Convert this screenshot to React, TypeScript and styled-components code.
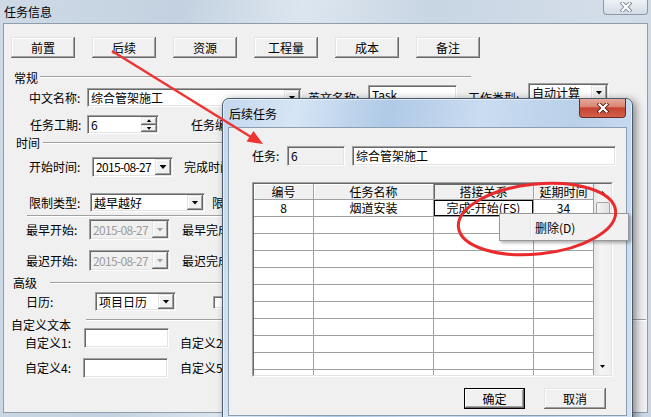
import React, { FC } from 'react'
import styled, { createGlobalStyle, css } from 'styled-components'

const GlobalStyle = createGlobalStyle`
  * { box-sizing: border-box; }
  html, body { margin: 0; padding: 0; }
  body {
    font-family: "Noto Sans CJK SC", "Noto Sans", sans-serif;
    font-size: 12px;
    color: #000;
    background: #f0f0f0;
  }
`

const raised = css`
  background: #f0f0f0;
  box-shadow: inset -1px -1px #696969, inset 1px 1px #e3e3e3, inset -2px -2px #a0a0a0, inset 2px 2px #fff;
`

const sunken = css`
  border: 1px solid;
  border-color: #a0a0a0 #fff #fff #a0a0a0;
  box-shadow: inset 1px 1px #696969, inset -1px -1px #e3e3e3;
`

const Screen = styled.div`
  position: relative;
  width: 651px;
  height: 417px;
  overflow: hidden;
`

const MainWindow = styled.div`
  width: 100%;
  height: 100%;
  display: flex;
  flex-direction: column;
  padding: 0 3px 4px 3px;
  background: linear-gradient(100deg, #cfdae6 0%, #c3d1e0 25%, #dde6ef 42%, #c8d5e3 60%, #d4dee9 85%, #cad6e3 100%);
`

const TitleBar = styled.div`
  height: 23px;
  flex: none;
  display: flex;
  justify-content: space-between;
  align-items: center;
  padding-left: 1px;
  line-height: 23px;
`

const MainClose = styled.div`
  align-self: flex-start;
  width: 45px;
  height: 15px;
  border: 1px solid #8a98a9;
  border-top: none;
  border-radius: 0 0 4px 4px;
  background: linear-gradient(#eef2f6, #d3dbe5);
  display: flex;
  align-items: center;
  justify-content: center;
`

const Client = styled.div`
  flex: 1;
  border: 1px solid #8f9cab;
  background: #f0f0f0;
  display: flex;
  flex-direction: column;
  overflow: hidden;
`

const Toolbar = styled.div`
  display: flex;
  gap: 17px;
  margin-top: 13px;
  padding-left: 7px;
  flex: none;
`

const PushButton = styled.div<{ $w: number; $default?: boolean }>`
  ${raised};
  flex: none;
  width: ${p => p.$w}px;
  height: 21px;
  display: flex;
  align-items: center;
  justify-content: center;
  line-height: 1;
  ${p => p.$default && css`
    box-shadow: inset 0 0 0 1px #000, inset -2px -2px #696969, inset 2px 2px #fff, inset -3px -3px #a0a0a0;
  `}
`

const GroupHead = styled.div<{ $top: number; $left: number }>`
  display: flex;
  align-items: flex-start;
  flex: none;
  margin-top: ${p => p.$top}px;
  padding-left: ${p => p.$left}px;
  height: 12px;
  line-height: 12px;
  white-space: nowrap;
`

const EtchedLine = styled.div<{ $gap: number; $drop: number; $w: number }>`
  flex: none;
  width: ${p => p.$w}px;
  margin-left: ${p => p.$gap}px;
  margin-top: ${p => p.$drop}px;
  border-top: 1px solid #a0a0a0;
  border-bottom: 1px solid #fff;
`

const Row = styled.div<{ $top: number; $left: number; $h: number }>`
  display: flex;
  align-items: flex-start;
  flex: none;
  margin-top: ${p => p.$top}px;
  padding-left: ${p => p.$left}px;
  height: ${p => p.$h}px;
  white-space: nowrap;
`

const Label = styled.span<{ $w?: number; $gap?: number; $low?: boolean }>`
  flex: none;
  align-self: center;
  line-height: 14px;
  width: ${p => (p.$w ? `${p.$w}px` : 'auto')};
  margin-left: ${p => p.$gap ?? 0}px;
  margin-top: ${p => (p.$low ? 9 : 0)}px;
`

const Field = styled.div<{ $w: number; $h: number; $mt?: number; $gap?: number; $gray?: boolean }>`
  ${sunken};
  flex: none;
  width: ${p => p.$w}px;
  height: ${p => p.$h}px;
  margin-top: ${p => p.$mt ?? 0}px;
  margin-left: ${p => p.$gap ?? 0}px;
  padding: 1px;
  background: ${p => (p.$gray ? '#f0f0f0' : '#fff')};
  display: flex;
  align-items: stretch;
`

const FieldText = styled.span<{ $dim?: boolean; $narrow?: boolean }>`
  flex: 1;
  min-width: 0;
  overflow: hidden;
  white-space: nowrap;
  padding-left: 2px;
  display: flex;
  align-items: center;
  line-height: 14px;
  color: ${p => (p.$dim ? '#9c9c9c' : '#000')};
  letter-spacing: ${p => (p.$narrow ? '-0.65px' : '0')};
`

const DropButton = styled.span`
  ${raised};
  flex: none;
  width: 16px;
  display: flex;
  align-items: center;
  justify-content: center;
`

const Arrow = styled.span<{ $dim?: boolean; $up?: boolean; $small?: boolean }>`
  flex: none;
  width: ${p => (p.$small ? 5 : 7)}px;
  height: ${p => (p.$small ? 3 : 4)}px;
  background: ${p => (p.$dim ? '#a0a0a0' : '#000')};
  clip-path: ${p => (p.$up ? 'polygon(50% 0, 100% 100%, 0 100%)' : 'polygon(0 0, 100% 0, 50% 100%)')};
`

const SpinStack = styled.span`
  flex: none;
  width: 16px;
  display: flex;
  flex-direction: column;
`

const SpinHalf = styled.span`
  ${raised};
  flex: 1;
  display: flex;
  align-items: center;
  justify-content: center;
`

const CheckBox = styled.span`
  ${sunken};
  flex: none;
  width: 13px;
  height: 13px;
  margin-left: 37px;
  margin-top: 4px;
  background: #fff;
`

/* ---------- dialog ---------- */

const Dialog = styled.div`
  position: absolute;
  left: 222px;
  top: 98px;
  width: 411px;
  height: 324px;
  border: 1px solid #4a5b70;
  border-radius: 7px 7px 0 0;
  background: linear-gradient(100deg, #c3d8ee 0%, #d6e5f5 16%, #afc9e6 36%, #cadcf0 56%, #b9d0e9 76%, #d3e2f3 100%);
  box-shadow: 3px 2px 9px rgba(0, 0, 0, 0.45), inset 0 0 0 1px rgba(255, 255, 255, 0.55);
  padding: 0 5px 5px 5px;
  display: flex;
  flex-direction: column;
  z-index: 1;
`

const DialogTitle = styled.div`
  height: 28px;
  flex: none;
  display: flex;
  justify-content: space-between;
  align-items: center;
  padding-left: 1px;
`

const DialogClose = styled.div`
  align-self: flex-start;
  width: 47px;
  height: 19px;
  margin-right: 1px;
  border: 1px solid #6e2c24;
  border-top: none;
  border-radius: 0 0 4px 4px;
  background: linear-gradient(#e6a89b 0%, #d98674 42%, #c5432f 50%, #d2604b 100%);
  display: flex;
  align-items: center;
  justify-content: center;
`

const DialogClient = styled.div`
  flex: 1;
  border: 1px solid #8b9db1;
  background: #f0f0f0;
  display: flex;
  flex-direction: column;
`

const GridFrame = styled.div`
  margin: 16px 0 0 23px;
  width: 361px;
  height: 195px;
  flex: none;
  border: 1px solid;
  border-color: #a0a0a0 #fff #fff #a0a0a0;
`

const GridInner = styled.div`
  width: 100%;
  height: 100%;
  border: 1px solid;
  border-color: #696969 #e3e3e3 #e3e3e3 #696969;
  background: #fff;
  display: flex;
  overflow: hidden;
`

const Cells = styled.div`
  display: grid;
  grid-template-columns: 60px 120px 100px 60px;
  grid-template-rows: 16px;
  grid-auto-rows: 17px;
  flex: none;
  align-content: start;
`

const HeadCell = styled.div<{ $active?: boolean }>`
  background: #f0f0f0;
  border-right: 1px solid #a0a0a0;
  border-bottom: 1px solid #a0a0a0;
  box-shadow: ${p => (p.$active ? 'inset 1px 1px #696969' : 'inset 1px 1px #fff')};
  text-align: center;
  line-height: 15px;
`

const DataCell = styled.div<{ $editing?: boolean }>`
  border-right: 1px solid #a0a0a0;
  border-bottom: 1px solid #a0a0a0;
  text-align: center;
  line-height: 16px;
  white-space: nowrap;
  overflow: hidden;
  ${p => p.$editing && css`box-shadow: inset 0 0 0 1px #000;`}
`

const ScrollBar = styled.div`
  flex: 1;
  display: flex;
  flex-direction: column;
  background: linear-gradient(90deg, #e6e6e6, #f4f4f4 40%, #f0f0f0);
`

const ScrollArrow = styled.div`
  height: 17px;
  flex: none;
  display: flex;
  align-items: center;
  justify-content: center;
`

const ScrollTrack = styled.div`
  flex: 1;
  padding: 1px 1px 0 2px;
`

const ScrollThumb = styled.div`
  height: 26px;
  border: 1px solid #a3a3a3;
  border-radius: 2px;
  background: linear-gradient(90deg, #f2f2f2, #e2e2e2);
`

const DialogActions = styled.div`
  display: flex;
  justify-content: flex-end;
  gap: 19px;
  margin-top: 11px;
  padding-right: 20px;
`

const ContextMenu = styled.div`
  position: absolute;
  left: 499px;
  top: 213px;
  width: 130px;
  height: 28px;
  border: 1px solid #979797;
  background: #f1f1f1;
  box-shadow: 2px 2px 3px rgba(0, 0, 0, 0.3);
  padding: 2px;
  display: flex;
  z-index: 2;
`

const MenuGutter = styled.div`
  flex: none;
  width: 29px;
  border-right: 1px solid #e2e3e3;
  box-shadow: 1px 0 #fff;
`

const MenuItem = styled.div`
  padding-left: 4px;
  display: flex;
  align-items: center;
`

const Annotation = styled.svg`
  position: absolute;
  left: 0;
  top: 0;
  z-index: 3;
  pointer-events: none;
`

const CloseGlyph: FC<{ outline: string }> = ({ outline }) => (
  <svg width="12" height="10" viewBox="0 0 12 10">
    <path d="M2.5 1.5 L9.5 8.5 M9.5 1.5 L2.5 8.5" stroke={outline} strokeWidth="4" strokeLinecap="square" />
    <path d="M2.5 1.5 L9.5 8.5 M9.5 1.5 L2.5 8.5" stroke="#fff" strokeWidth="2.2" strokeLinecap="square" />
  </svg>
)

const Combo: FC<{ w: number; h: number; text: string; mt?: number; narrow?: boolean; disabled?: boolean }> = ({
  w, h, text, mt, narrow, disabled,
}) => (
  <Field $w={w} $h={h} $mt={mt} $gray={disabled}>
    <FieldText $narrow={narrow} $dim={disabled}>{text}</FieldText>
    <DropButton>
      <Arrow $dim={disabled} />
    </DropButton>
  </Field>
)

const tabs = ['前置', '后续', '资源', '工程量', '成本', '备注']
const emptyRows = Array.from({ length: 10 })

const App: FC = () => (
  <Screen>
    <GlobalStyle />
    <MainWindow>
      <TitleBar>
        <span>任务信息</span>
        <MainClose>
          <CloseGlyph outline="#7d8896" />
        </MainClose>
      </TitleBar>
      <Client>
        <Toolbar>
          {tabs.map(t => (
            <PushButton key={t} $w={64}>{t}</PushButton>
          ))}
        </Toolbar>

        <GroupHead $top={14} $left={10}>
          常规
          <EtchedLine $gap={2} $drop={4} $w={431} />
        </GroupHead>

        <Row $top={4} $left={25} $h={19}>
          <Label $w={58}>中文名称:</Label>
          <Combo w={215} h={19} text="综合管架施工" />
          <Label $gap={6} $w={60}>英文名称:</Label>
          <Field $w={89} $h={20} $mt={-3}>
            <FieldText>Task</FieldText>
          </Field>
          <Label $gap={11} $w={60}>工作类型:</Label>
          <Combo w={81} h={19} mt={-5} text="自动计算" />
        </Row>

        <Row $top={8} $left={26} $h={19}>
          <Label $w={57}>任务工期:</Label>
          <Field $w={72} $h={19}>
            <FieldText>6</FieldText>
            <SpinStack>
              <SpinHalf><Arrow $up $small /></SpinHalf>
              <SpinHalf><Arrow $small /></SpinHalf>
            </SpinStack>
          </Field>
          <Label $gap={32}>任务编码:</Label>
        </Row>

        <GroupHead $top={3} $left={12}>
          时间
          <EtchedLine $gap={3} $drop={5} $w={428} />
        </GroupHead>

        <Row $top={8} $left={25} $h={20}>
          <Label $w={63}>开始时间:</Label>
          <Combo w={81} h={20} text="2015-08-27" narrow />
          <Label $gap={11}>完成时间:</Label>
        </Row>

        <Row $top={16} $left={25} $h={19}>
          <Label $w={61}>限制类型:</Label>
          <Combo w={115} h={19} text="越早越好" />
          <Label $gap={7}>限制时间:</Label>
        </Row>

        <Row $top={3} $left={23} $h={2}>
          <EtchedLine $gap={0} $drop={0} $w={600} />
        </Row>

        <Row $top={2} $left={22} $h={21}>
          <Label $w={63}>最早开始:</Label>
          <Combo w={81} h={21} text="2015-08-27" narrow disabled />
          <Label $gap={12}>最早完成:</Label>
        </Row>

        <Row $top={10} $left={22} $h={21}>
          <Label $w={63}>最迟开始:</Label>
          <Combo w={81} h={21} text="2015-08-27" narrow disabled />
          <Label $gap={12}>最迟完成:</Label>
        </Row>

        <GroupHead $top={6} $left={9}>
          高级
          <EtchedLine $gap={13} $drop={5} $w={560} />
        </GroupHead>

        <Row $top={3} $left={22} $h={19}>
          <Label $w={69}>日历:</Label>
          <Combo w={81} h={19} text="项目日历" />
          <CheckBox />
        </Row>

        <GroupHead $top={8} $left={7}>
          自定义文本
          <EtchedLine $gap={15} $drop={0} $w={560} />
        </GroupHead>

        <Row $top={-3} $left={21} $h={20}>
          <Label $w={59} $low>自定义1:</Label>
          <Field $w={85} $h={20} />
          <Label $gap={11} $low>自定义2:</Label>
        </Row>

        <Row $top={10} $left={21} $h={20}>
          <Label $w={58}>自定义4:</Label>
          <Field $w={85} $h={20} />
          <Label $gap={12}>自定义5:</Label>
        </Row>
      </Client>
    </MainWindow>

    <Dialog>
      <DialogTitle>
        <span>后续任务</span>
        <DialogClose>
          <CloseGlyph outline="#5a1d15" />
        </DialogClose>
      </DialogTitle>
      <DialogClient>
        <Row $top={18} $left={23} $h={20}>
          <Label $w={35}>任务:</Label>
          <Field $w={58} $h={20} $gray>
            <FieldText>6</FieldText>
          </Field>
          <Field $w={264} $h={20} $gap={7}>
            <FieldText>综合管架施工</FieldText>
          </Field>
        </Row>

        <GridFrame>
          <GridInner>
            <Cells>
              <HeadCell>编号</HeadCell>
              <HeadCell>任务名称</HeadCell>
              <HeadCell $active>搭接关系</HeadCell>
              <HeadCell>延期时间</HeadCell>
              <DataCell>8</DataCell>
              <DataCell>烟道安装</DataCell>
              <DataCell $editing>完成-开始(FS)</DataCell>
              <DataCell>34</DataCell>
              {emptyRows.map((_, i) => (
                <React.Fragment key={i}>
                  <DataCell />
                  <DataCell />
                  <DataCell />
                  <DataCell />
                </React.Fragment>
              ))}
            </Cells>
            <ScrollBar>
              <ScrollArrow><Arrow $up $small /></ScrollArrow>
              <ScrollTrack>
                <ScrollThumb />
              </ScrollTrack>
              <ScrollArrow><Arrow $small /></ScrollArrow>
            </ScrollBar>
          </GridInner>
        </GridFrame>

        <DialogActions>
          <PushButton $w={61} $default>确定</PushButton>
          <PushButton $w={62}>取消</PushButton>
        </DialogActions>
      </DialogClient>
    </Dialog>

    <ContextMenu>
      <MenuGutter />
      <MenuItem>删除(D)</MenuItem>
    </ContextMenu>

    <Annotation width="651" height="417" viewBox="0 0 651 417">
      <line x1="112" y1="51" x2="251" y2="137" stroke="#ef3434" strokeWidth="2.5" />
      <polygon points="263,144 246.5,141.5 253.5,131" fill="#ef3434" />
      <ellipse
        cx="537"
        cy="219"
        rx="79"
        ry="35"
        fill="none"
        stroke="#ea2b2d"
        strokeWidth="3"
        transform="rotate(-6 537 219)"
      />
    </Annotation>
  </Screen>
)

export default App
